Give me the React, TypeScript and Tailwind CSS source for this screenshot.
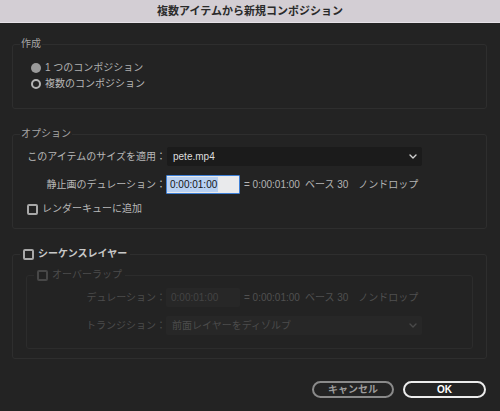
const font = { fontFamily: '"Liberation Sans", "Noto Sans CJK JP", sans-serif' };

function Chevron({ dim }: { dim?: boolean }) {
  return (
    <svg width="8" height="5" viewBox="0 0 8 5" className="shrink-0">
      <path d="M1 1 L4 4 L7 1" fill="none" stroke={dim ? '#4a4a4a' : '#d0d0d0'} strokeWidth="1.4" strokeLinecap="round" strokeLinejoin="round" />
    </svg>
  );
}

function Check({ dim }: { dim?: boolean }) {
  return (
    <span className={`inline-block w-[11px] h-[11px] rounded-[2px] border-2 shrink-0 ${dim ? 'border-[#474747]' : 'border-[#a8a8a8]'}`} />
  );
}

function Timecode({ dim }: { dim?: boolean }) {
  return (
    <span className={`ml-[4px] flex items-center ${dim ? 'text-[#505050]' : 'text-[#b4b4b4]'}`}>
      <span>= 0:00:01:00</span>
      <span className="ml-[5px]">ベース 30</span>
      <span className="ml-[10px]">ノンドロップ</span>
    </span>
  );
}

export default function App() {
  return (
    <div className="w-[500px] h-[411px] bg-[#232323] flex flex-col text-[10px] leading-[14px] overflow-hidden" style={font}>
      {/* Title bar */}
      <div className="h-[23px] shrink-0 bg-[#d3ced4] border-b border-[#e6e2e7] flex items-center justify-center">
        <span className="text-[11px] font-bold text-[#2a2a2a]">複数アイテムから新規コンポジション</span>
      </div>

      {/* 作成 */}
      <fieldset className="mt-[14px] ml-3 mr-[13px] border border-[#2e2e2e] rounded-[3px]">
        <legend className="ml-[7px] px-[1px] text-[#a5a5a5] leading-[14px]">作成</legend>
        <div className="pl-[18px] pt-[9px] pb-[16px]">
          <div className="flex items-center h-[16px] gap-[4px] text-[#b0b0b0]">
            <span className="w-[10px] h-[10px] rounded-full bg-[#9a9a9a]" />
            <span>1 つのコンポジション</span>
          </div>
          <div className="flex items-center h-[16px] gap-[4px] text-[#b8b8b8]">
            <span className="w-[10px] h-[10px] rounded-full border-2 border-[#b4b4b4]" />
            <span>複数のコンポジション</span>
          </div>
        </div>
      </fieldset>

      {/* オプション */}
      <fieldset className="mt-[18px] ml-3 mr-[13px] border border-[#2e2e2e] rounded-[3px]">
        <legend className="ml-[7px] px-[1px] text-[#a5a5a5] leading-[14px]">オプション</legend>
        <div className="pt-[6px] pb-[12px]">
          <div className="flex items-center h-[19px]">
            <span className="w-[153px] text-right text-[#b8b8b8]">このアイテムのサイズを適用：</span>
            <div className="ml-[1px] w-[255px] h-[19px] bg-[#1b1b1b] rounded-[2px] flex items-center justify-between pl-[6px] pr-[5px]">
              <span className="text-[#dedede]">pete.mp4</span>
              <Chevron />
            </div>
          </div>
          <div className="flex items-center h-[19px] mt-[9px]">
            <span className="w-[153px] text-right text-[#b8b8b8]">静止画のデュレーション：</span>
            <div className="w-[74px] h-[19px] bg-[#e9eaec] border-[1.5px] border-[#3d7fd6] rounded-[1px] flex items-center">
              <span className="bg-[#b9d1f2] pl-[3px] pr-[1px] text-[#151515] leading-[15px]">0:00:01:00</span>
            </div>
            <Timecode />
          </div>
          <div className="flex items-center h-[14px] mt-[8px] pl-[14px] gap-[4px] text-[#b8b8b8]">
            <Check />
            <span>レンダーキューに追加</span>
          </div>
        </div>
      </fieldset>

      {/* シーケンスレイヤー */}
      <fieldset className="mt-[18px] ml-3 mr-[13px] border border-[#2e2e2e] rounded-[3px]">
        <legend className="ml-[7px] px-[3px] flex items-center gap-[4px] h-[14px] text-[#c8c8c8] font-semibold">
          <Check />
          <span>シーケンスレイヤー</span>
        </legend>
        <div className="px-[13px] pt-[7px] pb-[9px]">
          <fieldset className="border border-[#2c2c2c] rounded-[3px]">
            <legend className="ml-[7px] px-[3px] flex items-center gap-[4px] h-[14px] text-[#4c4c4c]">
              <Check dim />
              <span>オーバーラップ</span>
            </legend>
            <div className="pt-[6px] pb-[13px]">
              <div className="flex items-center h-[19px]">
                <span className="w-[139px] text-right text-[#4c4c4c]">デュレーション：</span>
                <div className="w-[74px] h-[19px] bg-[#272727] rounded-[2px] flex items-center pl-[5px]">
                  <span className="text-[#444444]">0:00:01:00</span>
                </div>
                <Timecode dim />
              </div>
              <div className="flex items-center h-[19px] mt-[9px]">
                <span className="w-[139px] text-right text-[#4c4c4c]">トランジション：</span>
                <div className="w-[256px] h-[19px] bg-[#272727] rounded-[2px] flex items-center justify-between pl-[6px] pr-[5px]">
                  <span className="text-[#4c4c4c]">前面レイヤーをディゾルブ</span>
                  <Chevron dim />
                </div>
              </div>
            </div>
          </fieldset>
        </div>
      </fieldset>

      {/* Buttons */}
      <div className="mt-[22px] pr-[14px] flex justify-end gap-[9px]">
        <button className="w-[82px] h-[17px] rounded-full border-2 border-[#8a8a8a] text-[#9c9c9c] font-bold text-[10px] leading-[13px] flex items-center justify-center">
          キャンセル
        </button>
        <button className="w-[83px] h-[17px] rounded-full border-2 border-[#ececec] text-white font-bold text-[10px] leading-[13px] flex items-center justify-center">
          OK
        </button>
      </div>
    </div>
  );
}
